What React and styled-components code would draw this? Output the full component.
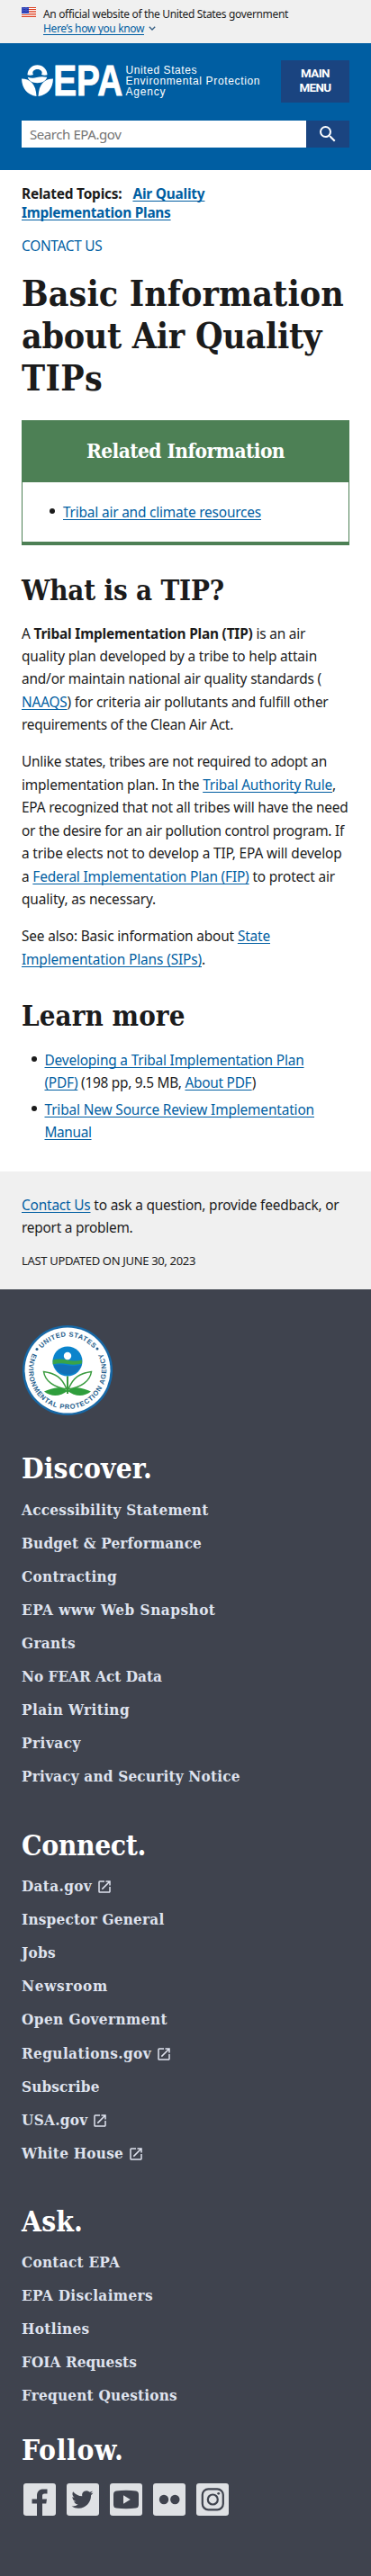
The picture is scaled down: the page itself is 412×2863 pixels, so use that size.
import React from 'react';
import styled, { createGlobalStyle } from 'styled-components';

const sans = '"Noto Sans", "Open Sans", sans-serif';
const serif = '"DejaVu Serif Condensed", "DejaVu Serif", serif';

const GlobalStyle = createGlobalStyle`
  *, *::before, *::after { box-sizing: border-box; }
  body {
    margin: 0;
    background: #fff;
    color: #1b1b1b;
    font: 15.4px/25.44px ${sans};
  }
  ul, p, h1, h2, h3 { margin: 0; padding: 0; }
  ul { list-style: none; }
`;

const Page = styled.div`
  width: 412px;
  height: 2863px;
  display: flex;
  flex-direction: column;
  overflow: hidden;
`;

const Line = styled.span`
  display: block;
  white-space: pre;
  letter-spacing: ${(p) => p.$track || 0}px;
`;

const Run = styled.span`
  letter-spacing: ${(p) => p.$track || 0}px;
`;

const Link = styled.a`
  color: #005ea2;
  text-decoration: underline;
  text-decoration-thickness: 1px;
  text-underline-offset: 2px;
  text-decoration-skip-ink: none;
`;

/* Government banner */
const Banner = styled.div`
  height: 48px;
  padding: 8px 24px 0;
  background: #f0f0f0;
  display: flex;
  gap: 8px;
  font-size: 12px;
  line-height: 16.4px;
`;
const Flag = styled.svg`
  width: 16px;
  height: 11px;
  flex: none;
`;
const Chevron = styled.svg`
  width: 8px;
  height: 5px;
  margin-left: 5px;
  vertical-align: 2px;
`;

/* Header */
const Header = styled.header`
  height: 141px;
  background: #005ea2;
  padding: 19px 24px 0;
  display: flex;
  flex-direction: column;
  gap: 20px;
`;
const HeaderTop = styled.div`
  height: 47px;
  display: flex;
  justify-content: space-between;
`;
const Logo = styled.svg`
  width: 270px;
  height: 47px;
  overflow: visible;
`;
const MenuButton = styled.button`
  width: 76px;
  height: 47px;
  border: 0;
  padding: 0 0 1px;
  background: #1a4480;
  color: #fff;
  font: bold 13.4px/16px Roboto, sans-serif;
  display: flex;
  flex-direction: column;
  justify-content: center;
  align-items: center;
`;
const Search = styled.form`
  display: flex;
  height: 30px;
`;
const SearchField = styled.div`
  flex: 1;
  background: #fff;
  color: #757575;
  padding-left: 9px;
  font-size: 15px;
  line-height: 31px;
  letter-spacing: -0.42px;
`;
const SearchButton = styled.button`
  width: 48px;
  border: 0;
  padding: 0;
  background: #1a4480;
  display: flex;
  align-items: center;
  justify-content: center;
`;

/* Article */
const Main = styled.main`
  height: 1113px;
  padding: 15.5px 24px 0;
`;
const Topics = styled.div`
  font-weight: bold;
  line-height: 21px;
`;
const TopicLink = styled(Link)`
  margin-left: 12px;
  letter-spacing: -0.2px;
`;
const ContactLink = styled.div`
  color: #005ea2;
  margin-top: 14.8px;
`;
const Title = styled.h1`
  margin-top: 16px;
  font: bold 39px/47px ${serif};
`;
const Box = styled.section`
  margin-top: 23.3px;
  height: 139px;
  border: 1px solid #4d8055;
  border-top: 0;
  border-bottom-width: 4px;
`;
const BoxTitle = styled.h2`
  height: 69px;
  background: #4d8055;
  color: #fff;
  text-align: center;
  font: bold 22.5px/68px ${serif};
  letter-spacing: -0.57px;
`;
const BoxList = styled.ul`
  padding: 20.5px 0 0 45px;
`;
const Heading = styled.h2`
  margin-top: ${(p) => p.$top}px;
  font: bold 31px/42px ${serif};
`;
const Paragraph = styled.p`
  margin-top: ${(p) => p.$top}px;
`;
const List = styled.ul`
  margin-top: 15.7px;
  padding-left: 25.5px;
`;
const Item = styled.li`
  line-height: 25px;
  margin-bottom: 5px;
  &::before {
    content: '';
    float: left;
    width: 6px;
    height: 6px;
    margin: 8.5px 0 0 -15px;
    border-radius: 50%;
    background: #1b1b1b;
  }
`;

/* Feedback strip */
const Feedback = styled.section`
  height: 131px;
  padding: 24.5px 24px 0;
  background: #f0f0f0;
`;
const Updated = styled.p`
  margin-top: 11.5px;
  font-size: 13px;
`;

/* Footer */
const Footer = styled.footer`
  flex: 1;
  padding: 39px 24px 0;
  background: #3f434e;
`;
const Seal = styled.svg`
  display: block;
  width: 102px;
  height: 102px;
`;
const FooterTitle = styled.h2`
  margin-top: ${(p) => p.$top}px;
  color: #fff;
  font: bold 31.5px/40px ${serif};
`;
const FooterList = styled.ul`
  margin-top: ${(p) => p.$top}px;
`;
const FooterItem = styled.li`
  height: 37.05px;
  color: #dfe3ef;
  font: bold 17px/24px ${serif};
  display: flex;
  gap: 5px;
`;
const OutIcon = styled.svg`
  width: 18px;
  height: 18px;
  margin-top: 4px;
`;
const Social = styled.ul`
  display: flex;
  gap: 12px;
  margin: 17.2px 0 0 2px;
`;
const SocialTile = styled.li`
  width: 36px;
  height: 36px;
  border-radius: 3px;
  background: #dfe1e4;
  color: #3f434e;
  svg { display: block; width: 36px; height: 36px; }
`;

const discover = [
  ['Accessibility Statement', 0.26],
  ['Budget & Performance', 0.17],
  ['Contracting', 0.32],
  ['EPA www Web Snapshot', 0.51],
  ['Grants', 0.36],
  ['No FEAR Act Data', 0.02],
  ['Plain Writing', 0.43],
  ['Privacy', 0.52],
  ['Privacy and Security Notice', 0.2],
];
const connect = [
  ['Data.gov', 0.34, true],
  ['Inspector General', 0.22],
  ['Jobs', 0.32],
  ['Newsroom', 0.73],
  ['Open Government', 0.44],
  ['Regulations.gov', 0.41, true],
  ['Subscribe', 0.16],
  ['USA.gov', 0.3, true],
  ['White House', 0.24, true],
];
const ask = [
  ['Contact EPA', 0.28],
  ['EPA Disclaimers', 0.38],
  ['Hotlines', 0.34],
  ['FOIA Requests', 0.09],
  ['Frequent Questions', 0.22],
];

const LinkGroup = ({ items, top }) => (
  <FooterList $top={top}>
    {items.map(([label, track, out]) => (
      <FooterItem key={label}>
        <Line $track={track}>{label}</Line>
        {out && (
          <OutIcon viewBox="0 0 24 24" fill="#dfe3ef">
            <path d="M19 19H5V5h7V3H5a2 2 0 0 0-2 2v14a2 2 0 0 0 2 2h14c1.100 0 2-.9 2-2v-7h-2v7zM14 3v2h3.590l-9.830 9.830 1.410 1.410L19 6.410V10h2V3h-7z" />
          </OutIcon>
        )}
      </FooterItem>
    ))}
  </FooterList>
);

const UsFlag = () => (
  <Flag viewBox="0 0 16 11">
    <rect width="16" height="11" fill="#fff" />
    {[0, 2, 4, 6, 8, 10].map((y) => (
      <rect key={y} y={y} width="16" height="1" fill="#db3e1f" />
    ))}
    <rect width="8" height="7" fill="#1e33b1" />
    {[1, 3, 5].map((y) => [1, 3, 5, 7].map((x) => (
      <circle key={`${x}-${y}`} cx={x} cy={y + (x % 4 === 1 ? 0 : 0.6)} r="0.45" fill="#fff" />
    )))}
  </Flag>
);

const EpaLogo = () => (
  <Logo viewBox="0 0 270 47" fill="#fff">
    <path d="M6.500 16.200a11 11 0 0 1 22 0q-3 1-6.500-.2c2-3.500-1-6-4.500-6s-6.500 2.500-4.500 6q-3.500 1.200-6.500 .2z" />
    <path d="M6.800 18.800q5 1.600 10 .3t11.400-.3c-1 4-5 6.400-10.700 6.400s-9.700-2.400-10.700-6.400z" />
    <path d="M0 20.500C9 20.500 16 26 16.500 40 6 38.500 .5 31.500 0 20.500z" />
    <path d="M35 20.500C26 20.500 19 26 18.500 40 29 38.500 34.500 31.500 35 20.500z" />
    <text x="35.200" y="39.200" fontFamily="Liberation Sans, sans-serif" fontWeight="bold" fontSize="47.500" stroke="#fff" strokeWidth="0.900" textLength="77" lengthAdjust="spacingAndGlyphs">EPA</text>
    <g fontFamily="Liberation Sans, sans-serif" fontSize="12">
      <text x="115.500" y="15" textLength="79" lengthAdjust="spacing">United States</text>
      <text x="115.500" y="27.300" textLength="149" lengthAdjust="spacing">Environmental Protection</text>
      <text x="115.500" y="39.400" textLength="44" lengthAdjust="spacing">Agency</text>
    </g>
  </Logo>
);

const EpaSeal = () => (
  <Seal viewBox="-51 -51 102 102">
    <defs>
      <path id="arcTop" d="M-37.500 0A37.500 37.500 0 0 1 37.500 0" />
      <path id="arcBottom" d="M-30.400 -30.400A43 43 0 1 0 30.400 -30.400" />
    </defs>
    <circle r="50" fill="#1768a6" />
    <circle r="47.500" fill="#fff" />
    <g fontFamily="Liberation Sans, sans-serif" fontWeight="bold" fontSize="7.600" fill="#245d8c">
      <text textAnchor="middle"><textPath href="#arcTop" startOffset="50%" textLength="65" lengthAdjust="spacing">UNITED STATES</textPath></text>
      <text textAnchor="middle"><textPath href="#arcBottom" startOffset="50%" textLength="174" lengthAdjust="spacing">ENVIRONMENTAL PROTECTION AGENCY</textPath></text>
    </g>
    <circle cx="-34" cy="-23.500" r="1.500" fill="#245d8c" />
    <circle cx="33" cy="-24" r="1.500" fill="#245d8c" />
    <circle cy="-10" r="16.500" fill="#0b84cc" />
    <path d="M-16.400 -11.500q8-2 16 0t16.400 0v4q-8 2-16 .5t-16.400 .5z" fill="#39a348" />
    <path d="M-15.500 -6q8-1 15.500 .5t15.500-.5a16.500 16.500 0 0 1-31 0z" fill="#1271b7" />
    <circle cy="-16" r="4.200" fill="#fff" />
    <path d="M0 6.500V26" stroke="#3a9b3f" strokeWidth="2" />
    <g fill="#fff" stroke="#3a9b3f" strokeWidth="1.500">
      <path d="M-1 21C-6 8-14 3-26.500 1.500-25 12-15 19-1 21z" />
      <path d="M1 21C6 8 14 3 26.500 1.500 25 12 15 19 1 21z" />
    </g>
    <path d="M0 23C-8 16-18 20-26 23.500-18 30-8 29 0 23zM0 23C8 16 18 20 26 23.500 18 30 8 29 0 23z" fill="#2f9e3c" />
  </Seal>
);

export default function App() {
  return (
    <Page>
      <GlobalStyle />
      <Banner>
        <UsFlag />
        <div>
          <Line $track={-0.34}>An official website of the United States government</Line>
          <Line><Link><Run $track={-0.36}>Here’s how you know</Run></Link>
            <Chevron viewBox="0 0 8 5" fill="none" stroke="#345d82" strokeWidth="1.300"><path d="M.8.800 4 4 7.200.800" /></Chevron>
          </Line>
        </div>
      </Banner>
      <Header>
        <HeaderTop>
          <EpaLogo />
          <MenuButton>
            <Line $track={-0.6}>MAIN</Line>
            <Line $track={-0.6}>MENU</Line>
          </MenuButton>
        </HeaderTop>
        <Search>
          <SearchField>Search EPA.gov</SearchField>
          <SearchButton type="button">
            <svg width="24" height="24" viewBox="0 0 24 24" fill="#fff"><path d="M15.500 14h-.79l-.28-.27A6.470 6.470 0 0 0 16 9.500 6.500 6.500 0 1 0 9.500 16c1.610 0 3.090-.59 4.230-1.570l.27.28v.79l5 4.990L20.490 19l-4.990-5zm-6 0C7.010 14 5 11.990 5 9.500S7.010 5 9.500 5 14 7.010 14 9.500 11.990 14 9.500 14z" /></svg>
          </SearchButton>
        </Search>
      </Header>

      <Main>
        <Topics>
          <Line><Run $track={-0.2}>Related Topics:</Run><TopicLink>Air Quality</TopicLink></Line>
          <Line $track={-0.25}><Link>Implementation Plans</Link></Line>
        </Topics>
        <ContactLink><Line $track={-0.26}>CONTACT US</Line></ContactLink>
        <Title>
          <Line $track={0.1}>Basic Information</Line>
          <Line $track={-0.29}>about Air Quality</Line>
          <Line $track={0.33}>TIPs</Line>
        </Title>
        <Box>
          <BoxTitle>Related Information</BoxTitle>
          <BoxList><Item><Line $track={-0.18}><Link>Tribal air and climate resources</Link></Line></Item></BoxList>
        </Box>
        <Heading $top={29.4}><Line $track={-0.16}>What is a TIP?</Line></Heading>
        <Paragraph $top={14.2}>
          <Line $track={-0.18}>A <b>Tribal Implementation Plan (TIP)</b> is an air</Line>
          <Line $track={-0.163}>quality plan developed by a tribe to help attain</Line>
          <Line $track={-0.164}>and/or maintain national air quality standards (</Line>
          <Line $track={-0.199}><Link>NAAQS</Link>) for criteria air pollutants and fulfill other</Line>
          <Line $track={-0.261}>requirements of the Clean Air Act.</Line>
        </Paragraph>
        <Paragraph $top={15.6}>
          <Line $track={-0.247}>Unlike states, tribes are not required to adopt an</Line>
          <Line $track={-0.166}>implementation plan. In the <Link>Tribal Authority Rule</Link>,</Line>
          <Line $track={-0.199}>EPA recognized that not all tribes will have the need</Line>
          <Line $track={-0.248}>or the desire for an air pollution control program. If</Line>
          <Line $track={-0.133}>a tribe elects not to develop a TIP, EPA will develop</Line>
          <Line $track={-0.159}>a <Link>Federal Implementation Plan (FIP)</Link> to protect air</Line>
          <Line $track={-0.129}>quality, as necessary.</Line>
        </Paragraph>
        <Paragraph $top={15.8}>
          <Line $track={-0.148}>See also: Basic information about <Link>State</Link></Line>
          <Line $track={-0.12}><Link>Implementation Plans (SIPs)</Link>.</Line>
        </Paragraph>
        <Heading $top={28.9}><Line $track={0.08}>Learn more</Line></Heading>
        <List>
          <Item>
            <Line $track={-0.177}><Link>Developing a Tribal Implementation Plan</Link></Line>
            <Line $track={-0.257}><Link>(PDF)</Link> (198 pp, 9.5 MB, <Link>About PDF</Link>)</Line>
          </Item>
          <Item>
            <Line $track={-0.136}><Link>Tribal New Source Review Implementation</Link></Line>
            <Line $track={-0.37}><Link>Manual</Link></Line>
          </Item>
        </List>
      </Main>

      <Feedback>
        <p>
          <Line $track={-0.182}><Link>Contact Us</Link> to ask a question, provide feedback, or</Line>
          <Line $track={-0.236}>report a problem.</Line>
        </p>
        <Updated><Line $track={-0.332}>LAST UPDATED ON JUNE 30, 2023</Line></Updated>
      </Feedback>

      <Footer>
        <EpaSeal />
        <FooterTitle $top={37.9}><Line $track={0.13}>Discover.</Line></FooterTitle>
        <LinkGroup items={discover} top={14.1} />
        <FooterTitle $top={31.5}><Line $track={-0.37}>Connect.</Line></FooterTitle>
        <LinkGroup items={connect} top={13.4} />
        <FooterTitle $top={31.1}><Line $track={0.15}>Ask.</Line></FooterTitle>
        <LinkGroup items={ask} top={13.1} />
        <FooterTitle $top={15.6}><Line $track={0.67}>Follow.</Line></FooterTitle>
        <Social>
          <SocialTile>
            <svg viewBox="0 0 36 36" fill="currentColor"><path d="M15 36V22.500H9.500V17.500H15v-3.500C15 9 17.500 6.500 22 6.500h4.500v5H23.500c-2 0-2.500 1-2.500 2.500v3.500h5l-.7 5H21V36z" /></svg>
          </SocialTile>
          <SocialTile>
            <svg viewBox="0 0 36 36" fill="currentColor"><path transform="translate(5.500 6) scale(1)" d="M23.950 4.570a10 10 0 0 1-2.820.77 4.960 4.960 0 0 0 2.160-2.720c-.95.550-2 .95-3.130 1.180a4.920 4.920 0 0 0-8.380 4.480C7.690 8.090 4.070 6.130 1.640 3.160a4.820 4.820 0 0 0-.67 2.480c0 1.710.87 3.210 2.190 4.100a4.900 4.900 0 0 1-2.230-.62v.06a4.920 4.920 0 0 0 3.950 4.830 5 5 0 0 1-2.210.08 4.940 4.940 0 0 0 4.600 3.420A9.870 9.870 0 0 1 0 19.540a13.990 13.990 0 0 0 7.550 2.210c9.050 0 14-7.500 14-13.980 0-.21 0-.42-.02-.63a9.940 9.940 0 0 0 2.420-2.570z" /></svg>
          </SocialTile>
          <SocialTile>
            <svg viewBox="0 0 36 36"><path fill="currentColor" d="M7 8.500q11-1.500 22 0 3 .5 3 4v11q0 3.500-3 4-11 1.500-22 0-3-.5-3-4v-11q0-3.500 3-4z" /><path fill="#dfe1e4" d="M15 13.200v9.600l7.800-4.800z" /></svg>
          </SocialTile>
          <SocialTile>
            <svg viewBox="0 0 36 36" fill="currentColor"><circle cx="12" cy="18" r="5.200" /><circle cx="24.300" cy="18" r="5.200" /></svg>
          </SocialTile>
          <SocialTile>
            <svg viewBox="0 0 36 36" fill="none" stroke="currentColor" strokeWidth="2.200"><rect x="6.800" y="6.300" width="23" height="23" rx="6.500" /><circle cx="18.300" cy="18" r="5.500" /><circle cx="24.700" cy="11.300" r="1.400" fill="currentColor" stroke="none" /></svg>
          </SocialTile>
        </Social>
      </Footer>
    </Page>
  );
}
